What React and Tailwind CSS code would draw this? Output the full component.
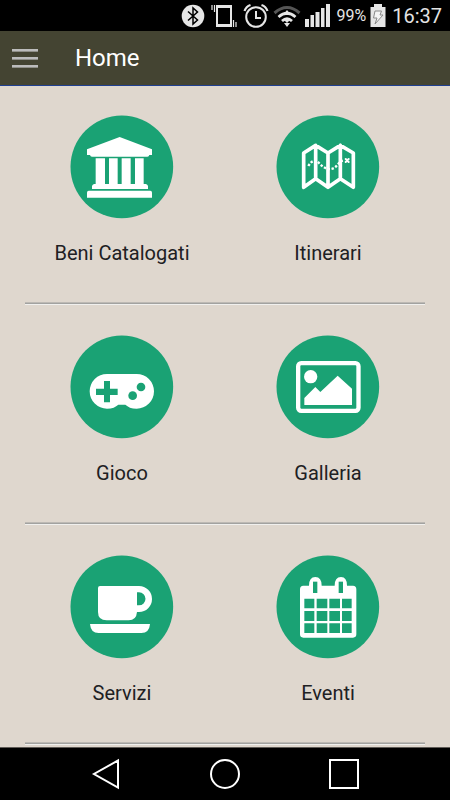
import React from "react";

function MuseumIcon() {
  return (
    <g fill="#fff">
      <path d="M179 93 L276 130 V147 H268 Q267 152 262 152 H96 Q91 152 90 147 H81 V130 Z" />
      <path d="M107 157 H135 V234 H147 V157 H173 V234 H185 V157 H212 V234 H225 V157 H251 V234 H258 Q264 236 264 241 V249 H96 V241 Q96 236 102 234 H107 Z" />
      <path d="M86 254 H271 Q276 254 276 260 V275 H81 V260 Q81 254 86 254 Z" />
    </g>
  );
}

function MapIcon() {
  return (
    <g fill="none" stroke="#fff" strokeLinejoin="round" strokeLinecap="round">
      <path
        strokeWidth="11"
        d="M113 141 L149 118 L186 141 L223 118 L262 141 V244 L223 218 L186 244 L149 218 L113 244 Z M149 118 V218 M186 141 V244 M223 118 V218"
      />
      <path
        strokeWidth="7"
        strokeLinecap="butt"
        strokeDasharray="7 5"
        d="M127 180 C136 164 148 160 157 169 C170 184 188 196 206 185 C216 178 220 164 235 163"
      />
      <path strokeWidth="6" d="M239 159 L248 168 M248 159 L239 168" />
    </g>
  );
}

function GameIcon() {
  return (
    <g>
      <path
        fill="#fff"
        d="M141 144 H230 A52 52 0 0 1 230 248 C214 248 204 243 196 236 H175 C167 243 157 248 141 248 A52 52 0 0 1 141 144 Z"
      />
      <path fill="#1aa274" d="M132 165 H150 V188 H173 V207 H150 V229 H132 V207 H108 V188 H132 Z" />
      <circle cx="243" cy="183" r="13" fill="#1aa274" />
      <circle cx="218" cy="209" r="13" fill="#1aa274" />
    </g>
  );
}

function GalleryIcon() {
  return (
    <g>
      <rect x="96.5" y="111.5" width="181" height="143" rx="9" fill="none" stroke="#fff" strokeWidth="13" />
      <circle cx="134" cy="152" r="20" fill="#fff" />
      <path fill="#fff" d="M115 237 V216 L148 183 L163 198 L215 149 L258 188 V237 Z" />
    </g>
  );
}

function CupIcon() {
  return (
    <g fill="#fff">
      <path
        fillRule="evenodd"
        d="M120 120 H237 A39 39 0 0 1 237 198 H231 Q229 223 206 223 H140 Q114 223 114 198 V126 Q114 120 120 120 Z M231 139 V178 H237 A19.5 19.5 0 0 0 237 139 Z"
      />
      <path d="M90 234 H270 Q268 261 244 261 H116 Q92 261 90 234 Z" />
    </g>
  );
}

function CalendarIcon() {
  return (
    <g>
      <path
        fill="#fff"
        d="M112 119 H129 Q129 93 148 93 Q167 93 167 119 H206 Q206 93 225 93 Q243 93 243 119 H261 Q271 119 271 130 V265 Q271 275 261 275 H112 Q102 275 102 265 V130 Q102 119 112 119 Z"
      />
      <g fill="#1aa274">
        <rect x="141" y="107" width="13" height="34" />
        <rect x="218" y="107" width="13" height="34" />
        <path d="M115 158 H145 V187 H115 Z M152 158 H184 V187 H152 Z M190 158 H222 V187 H190 Z M228 158 H257 V187 H228 Z" />
        <path d="M115 195 H145 V225 H115 Z M152 195 H184 V225 H152 Z M190 195 H222 V225 H190 Z M228 195 H257 V225 H228 Z" />
        <path d="M115 232 H145 V261 H115 Z M152 232 H184 V261 H152 Z M190 232 H222 V261 H190 Z M228 232 H257 V261 H228 Z" />
      </g>
    </g>
  );
}

const rows = [
  [
    { label: "Beni Catalogati", Icon: MuseumIcon },
    { label: "Itinerari", Icon: MapIcon },
  ],
  [
    { label: "Gioco", Icon: GameIcon },
    { label: "Galleria", Icon: GalleryIcon },
  ],
  [
    { label: "Servizi", Icon: CupIcon },
    { label: "Eventi", Icon: CalendarIcon },
  ],
];

function StatusBar() {
  return (
    <div className="flex h-[31px] shrink-0 items-center justify-end bg-black pr-2 text-[#e4e4e4]">
      <svg className="mr-1.5 h-6 w-6" viewBox="0 0 24 24" aria-hidden="true">
        <circle cx="12" cy="12" r="11.3" fill="#e6e6e6" />
        <path d="M7 7.5 L16.5 16 L12 20 V4 L16.5 8 L7 16.5" fill="none" stroke="#000" strokeWidth="1.5" />
      </svg>
      <svg className="mr-1.5 h-6 w-[26px]" viewBox="0 0 26 24" fill="none" stroke="#e6e6e6" aria-hidden="true">
        <rect x="6" y="2" width="14" height="20" strokeWidth="2" />
        <path d="M6 3 H20 M6 21 H20" strokeWidth="2" />
        <path d="M3.5 1 V8 M1 1 V6 M22.5 16 V23 M25 18 V23" strokeWidth="1.2" />
      </svg>
      <svg className="mr-1 h-[26px] w-[26px]" viewBox="0 0 26 26" fill="none" stroke="#e6e6e6" aria-hidden="true">
        <circle cx="13" cy="14" r="9.8" strokeWidth="2" />
        <path d="M13 8 V15 H18" strokeWidth="2" />
        <path d="M1.5 8 Q3 3.5 7.5 2 M24.5 8 Q23 3.5 18.5 2" strokeWidth="2.2" />
      </svg>
      <svg className="mr-1 h-6 w-7" viewBox="0 0 28 24" fill="none" aria-hidden="true">
        <path d="M1.500 9 Q14 -2 26.500 9" stroke="#555" strokeWidth="3" />
        <path d="M5.500 13 Q14 5.500 22.500 13" stroke="#e6e6e6" strokeWidth="2.800" />
        <path d="M9 17 Q14 12.500 19 17" stroke="#e6e6e6" strokeWidth="2.800" />
        <path d="M14 6 L18 11 H10 Z M10 15 H18 L14 19 Z M11 19 H17 L14 23 Z" fill="#e6e6e6" />
      </svg>
      <svg className="mr-1 h-6 w-[27px]" viewBox="0 0 27 24" fill="#e6e6e6" aria-hidden="true">
        <path d="M0 15 H4 V23 H0 Z M5.500 11 H9 V23 H5.500 Z M10.500 8 H14.500 V23 H10.500 Z M16 4 H19.500 V23 H16 Z M21 0 H25 V23 H21 Z" />
      </svg>
      <span className="mr-1 text-base leading-6">99%</span>
      <svg className="mr-1.5 h-6 w-4" viewBox="0 0 16 24" aria-hidden="true">
        <path d="M4 0 H12 V3 H15.500 V23 H0.500 V3 H4 Z" fill="#e6e6e6" />
        <path d="M5 7 H11.500 L10 11 H13 L5 20 L7 14 H3.500 Z" fill="#f5f5f5" stroke="#8a8a8a" strokeWidth="1" />
      </svg>
      <time className="text-xl leading-6">16:37</time>
    </div>
  );
}

export default function App() {
  return (
    <div className="flex h-screen flex-col bg-[#dfd7ce] font-[Roboto,sans-serif]">
      <StatusBar />
      <header className="flex h-[55px] shrink-0 items-center border-b border-[#1f3f91] bg-[#444432] pl-3 text-white">
        <button type="button" aria-label="Menu" className="mr-[37px] flex w-[26px] flex-col gap-[5px]">
          <span className="h-[3px] w-full border-b border-[#8f8f88] bg-[#bcbcbc]" />
          <span className="h-[3px] w-full border-b border-[#8f8f88] bg-[#bcbcbc]" />
          <span className="h-[3px] w-full border-b border-[#8f8f88] bg-[#bcbcbc]" />
        </button>
        <h1 className="text-2xl">Home</h1>
      </header>
      <main className="min-h-0 flex-1 overflow-hidden">
        {rows.map((row) => (
          <section key={row[0].label}>
            <div className="grid grid-cols-2 px-[19px] pt-[29px] pb-[35px]">
              {row.map(({ label, Icon }) => (
                <button key={label} type="button" className="flex flex-col items-center gap-5 text-xl leading-7 text-[#202023]">
                  <svg className="h-[104px] w-[104px]" viewBox="30 27 312 312" aria-hidden="true">
                    <circle cx="185.500" cy="182.500" r="154" fill="#1aa274" />
                    <Icon />
                  </svg>
                  <span>{label}</span>
                </button>
              ))}
            </div>
            <hr className="mx-[25px] mb-px h-[3px] border-t border-b border-t-[#bdb9b4] border-b-[#f1f0ee] bg-[#a2a2a0]" />
          </section>
        ))}
      </main>
      <nav className="flex h-[53px] shrink-0 items-center justify-center gap-[87px] border-t border-[#5f5b57] bg-black">
        <button type="button" aria-label="Back">
          <svg className="h-8 w-8" viewBox="0 0 32 32" fill="none" stroke="#fff" strokeWidth="2">
            <path d="M28 2.500 V29.500 L4 16 Z" />
          </svg>
        </button>
        <button type="button" aria-label="Home">
          <svg className="h-8 w-8" viewBox="0 0 32 32" fill="none" stroke="#fff" strokeWidth="2">
            <circle cx="16" cy="16" r="14" />
          </svg>
        </button>
        <button type="button" aria-label="Recent apps">
          <svg className="h-8 w-8" viewBox="0 0 32 32" fill="none" stroke="#fff" strokeWidth="2">
            <rect x="2" y="2" width="28" height="28" />
          </svg>
        </button>
      </nav>
    </div>
  );
}
